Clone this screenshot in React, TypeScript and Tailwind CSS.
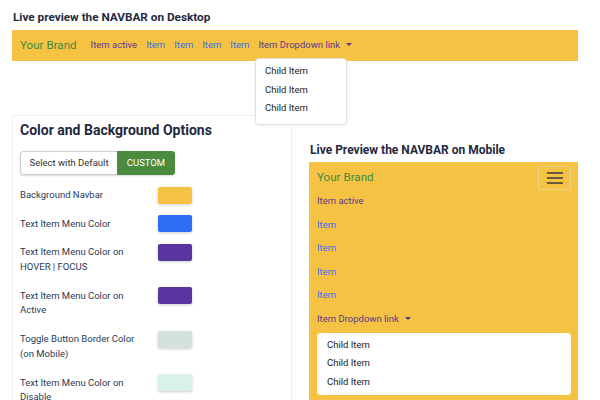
const yellow = 'bg-[#f6c244]'

interface ColorRow {
  label: string
  color: string
  h: string
}

const rows: ColorRow[] = [
  { label: 'Background Navbar', color: 'bg-[#f6c244]', h: 'h-[28.5px]' },
  { label: 'Text Item Menu Color', color: 'bg-[#2f6cf5]', h: 'h-[28.5px]' },
  { label: 'Text Item Menu Color on HOVER | FOCUS', color: 'bg-[#58359f]', h: 'h-[43.5px]' },
  { label: 'Text Item Menu Color on Active', color: 'bg-[#58359f]', h: 'h-[43.5px]' },
  { label: 'Toggle Button Border Color (on Mobile)', color: 'bg-[#d3e3dc]', h: 'h-[43.5px]' },
  { label: 'Text Item Menu Color on Disable', color: 'bg-[#d9f1e8]', h: 'h-[43.5px]' }
]

function Caret() {
  return <span className="inline-block ml-[6px] mb-[2px] border-x-[3px] border-t-[3px] border-x-transparent border-t-[#5a3a8c] align-middle" />
}

function ChildMenu({ className }: { className: string }) {
  return (
    <div className={`bg-white rounded-[4px] text-[9.5px] text-[#222] ${className}`}>
      <div className="h-[18.5px] leading-[18.5px]">Child Item</div>
      <div className="h-[18.5px] leading-[18.5px]">Child Item</div>
      <div className="h-[18.5px] leading-[18.5px]">Child Item</div>
    </div>
  )
}

export default function App() {
  return (
    <div className="w-[600px] h-[400px] overflow-hidden bg-white text-[#1f2a40]" style={{ fontFamily: 'Roboto, "Liberation Sans", sans-serif' }}>
      {/* Desktop preview */}
      <div className="px-[12px] pt-[10px]">
        <h2 className="text-[11.75px] font-bold leading-[15px] pl-[1px]">Live preview the NAVBAR on Desktop</h2>
        <nav className={`relative mt-[5px] h-[31px] w-[566px] ${yellow} flex items-center pl-[8px]`}>
          <span className="text-[11.6px] text-[#3d8c3f]">Your Brand</span>
          <ul className="flex items-center ml-[14px] gap-[9px] text-[9.5px]">
            <li className="text-[#5a3a8c]">Item active</li>
            <li className="text-[#3a6fe8]">Item</li>
            <li className="text-[#3a6fe8]">Item</li>
            <li className="text-[#3a6fe8]">Item</li>
            <li className="text-[#3a6fe8]">Item</li>
            <li className="text-[#5a3a8c]">
              Item Dropdown link
              <Caret />
            </li>
          </ul>
          <ChildMenu className="absolute left-[243px] top-[28px] w-[92px] pt-[3px] pb-[6px] pl-[9px] border border-[#e2e2e2] shadow-[0_1px_3px_rgba(0,0,0,0.08)]" />
        </nav>
      </div>

      <div className="flex mt-[54px] ml-[12px]">
        {/* Options */}
        <div className="w-[279px] h-[300px] pl-[7px] pt-[5px] border-l border-t border-[#f0f0f0] rounded-tl-[3px]">
          <h3 className="text-[14px] font-bold leading-[18px]">Color and Background Options</h3>
          <div className="flex mt-[12px] h-[24px] w-[155px] text-[9.5px] rounded-[3px] overflow-hidden shadow-[0_1px_2px_rgba(0,0,0,0.15)]">
            <div className="flex items-center justify-center w-[97px] border border-r-0 border-[#cfcfcf] rounded-l-[3px] text-[#333]">Select with Default</div>
            <div className="flex items-center justify-center flex-1 bg-[#4a8b3f] text-white">CUSTOM</div>
          </div>
          <div className="mt-[11px]">
            {rows.map((r) => (
              <div key={r.label} className={`flex items-start ${r.h}`}>
                <div className="w-[138px] pr-[14px] pt-[2px] text-[9.5px] leading-[14.5px] text-[#2b3a55]">{r.label}</div>
                <div className={`w-[34px] h-[17px] mt-[0.5px] rounded-[2px] ${r.color} shadow-[0_1px_3px_rgba(0,0,0,0.2)]`} />
              </div>
            ))}
          </div>
        </div>

        {/* Mobile preview */}
        <div className="flex-1 mt-[12px] border-l border-[#ececec] pl-[17px] pt-[16px]">
          <h2 className="text-[12px] font-bold leading-[15px] pl-[1px]">Live Preview the NAVBAR on Mobile</h2>
          <nav className={`mt-[4px] w-[269px] h-[260px] ${yellow} px-[8px] pt-[4px]`}>
            <div className="flex items-center justify-between">
              <span className="text-[11.6px] text-[#3d8c3f]">Your Brand</span>
              <button className="w-[33px] h-[24px] mr-[-1px] border border-[#ead48c] rounded-[3px] flex items-center justify-center">
                <svg width="16" height="12" viewBox="0 0 16 12">
                  <path d="M0 1h16M0 6h16M0 11h16" stroke="#3a3a3a" strokeWidth="1.3" />
                </svg>
              </button>
            </div>
            <ul className="text-[9.5px] mt-[-1px]">
              <li className="h-[23.6px] leading-[23.6px] text-[#5a3a8c]">Item active</li>
              <li className="h-[23.6px] leading-[23.6px] text-[#3a6fe8]">Item</li>
              <li className="h-[23.6px] leading-[23.6px] text-[#3a6fe8]">Item</li>
              <li className="h-[23.6px] leading-[23.6px] text-[#3a6fe8]">Item</li>
              <li className="h-[23.6px] leading-[23.6px] text-[#3a6fe8]">Item</li>
              <li className="h-[23.6px] leading-[23.6px] text-[#5a3a8c]">
                Item Dropdown link
                <Caret />
              </li>
            </ul>
            <ChildMenu className="mt-[2px] w-[254px] pl-[10px] pt-[3px] pb-[4px]" />
          </nav>
        </div>
      </div>
    </div>
  )
}
